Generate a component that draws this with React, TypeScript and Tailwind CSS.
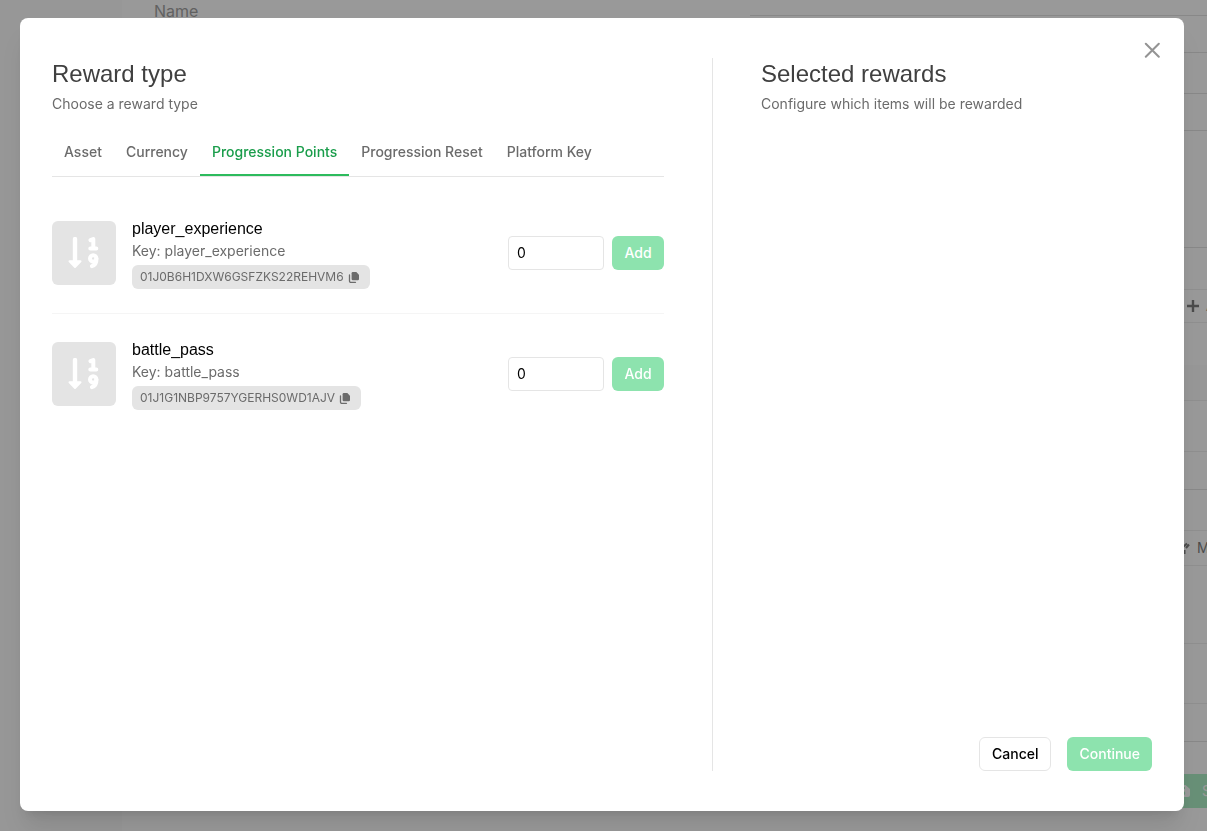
import { useState } from "react";

const tabs = [
  "Asset",
  "Currency",
  "Progression Points",
  "Progression Reset",
  "Platform Key",
];

const points = [
  { key: "player_experience", id: "01J0B6H1DXW6GSFZKS22REHVM6" },
  { key: "battle_pass", id: "01J1G1NBP9757YGERHS0WD1AJV" },
];

function SortIcon() {
  return (
    <svg viewBox="0 0 32 32" className="size-8 text-white" fill="none" stroke="currentColor" aria-hidden="true">
      <path d="M7 2V24" strokeWidth="4.400" strokeLinecap="round" />
      <path d="M1.500 24.300h11l-5.500 5.700z" fill="currentColor" strokeWidth="2" strokeLinejoin="round" />
      <path d="M22.500 3.200 25.300 2V11M22.300 11.500h6" strokeWidth="4" strokeLinecap="round" strokeLinejoin="round" />
      <circle cx="25.200" cy="21.400" r="3.200" strokeWidth="4" />
      <path d="M28.400 21.500c.2 3.800-1.200 6.500-4.500 7.600" strokeWidth="4" strokeLinecap="round" />
    </svg>
  );
}

function CopyIcon() {
  return (
    <svg viewBox="0 0 12 12" className="size-3" aria-hidden="true">
      <path d="M4.800 1h3.500L11 3.700V8a1.200 1.200 0 0 1-1.200 1.200h-5A1.200 1.200 0 0 1 3.600 8V2.200A1.200 1.200 0 0 1 4.800 1z" fill="currentColor" />
      <path d="M1.500 4V10a1.300 1.300 0 0 0 1.300 1.300H7.500" fill="none" stroke="currentColor" strokeWidth="1.300" strokeLinecap="round" />
    </svg>
  );
}

function PageBehind() {
  return (
    <div aria-hidden="true" className="flex h-screen overflow-hidden bg-white text-neutral-700">
      <div className="w-[122px] shrink-0 bg-neutral-50" />
      <div className="min-w-0 flex-1 pl-8 text-base leading-[22px] text-neutral-500">
        Name
      </div>
      <div className="w-[457px] shrink-0 overflow-hidden whitespace-nowrap text-sm">
        <div className="h-4 border-b border-neutral-300" />
        <div className="h-[37px] border-b border-neutral-300" />
        <div className="h-[41px] border-b border-neutral-300" />
        <div className="h-[37px] border-b border-neutral-300" />
        <div className="h-[117px] border-b border-neutral-300" />
        <div className="h-[42px] border-b border-neutral-200" />
        <div className="flex h-[33px] items-center border-b border-neutral-200 pl-[436px]">
          <svg viewBox="0 0 14 14" className="size-3.5 shrink-0" stroke="currentColor" strokeWidth="2.400">
            <path d="M7 1v12M1 7h12" />
          </svg>
          <span className="ml-1.5">Add</span>
        </div>
        <div className="h-[42px]" />
        <div className="h-9 border-b border-neutral-200 bg-neutral-50" />
        <div className="h-[51px] border-b border-neutral-200" />
        <div className="h-[38px] border-b border-neutral-300" />
        <div className="h-[41px] border-b border-neutral-200" />
        <div className="flex h-[35px] items-center border-b border-neutral-200 pl-[427px]">
          <svg viewBox="0 0 14 14" className="size-3.5 shrink-0" fill="none" stroke="currentColor" strokeWidth="2">
            <path d="M6 6 10 2.500M9 7l3-3.500M7.500 9v4" />
          </svg>
          <span className="ml-1.5">Manage</span>
        </div>
        <div className="h-[78px] border-b border-neutral-200" />
        <div className="h-[60px] border-b border-neutral-200" />
        <div className="h-[38px] border-b border-neutral-300" />
        <div className="mt-8 flex h-[34px] items-center bg-[#86e8ab] pl-[426px] text-white">
          <svg viewBox="0 0 14 14" className="size-3.5 shrink-0" fill="currentColor">
            <path fillRule="evenodd" d="M3 1h6.500L14 5v6a2 2 0 0 1-2 2H3a2 2 0 0 1-2-2V3a2 2 0 0 1 2-2zm4 6a2.200 2.200 0 1 0 .1 0zM4 3v2h5V3z" />
          </svg>
          <span className="ml-3">Save</span>
        </div>
      </div>
    </div>
  );
}

export default function App() {
  const [active, setActive] = useState("Progression Points");

  return (
    <div className="font-['Inter',sans-serif]">
      <PageBehind />
      <div className="fixed inset-0 flex bg-[#555555]/60 pt-[18px] pr-[23px] pb-5 pl-5">
        <div
          role="dialog"
          aria-modal="true"
          aria-labelledby="reward-title"
          className="relative grid flex-1 grid-cols-[3fr_2fr] rounded-lg bg-white px-8 py-10 shadow-xl"
        >
          <button type="button" aria-label="Close" className="absolute top-5 right-5 p-1 text-[#949494]">
            <svg viewBox="0 0 16 16" className="size-4" stroke="currentColor" strokeWidth="2" strokeLinecap="round">
              <path d="M1.800 1.800l13 13M14.800 1.800l-13 13" />
            </svg>
          </button>

          <section className="pr-12">
            <h2 id="reward-title" className="font-['Liberation_Sans',sans-serif] text-2xl leading-8 text-[#404040]">
              Reward type
            </h2>
            <p className="mt-1 text-sm text-[#6b6b6b]">Choose a reward type</p>

            <div role="tablist" className="mt-4 flex border-b border-neutral-200">
              {tabs.map((tab) => (
                <button
                  key={tab}
                  type="button"
                  role="tab"
                  aria-selected={tab === active}
                  onClick={() => setActive(tab)}
                  className={
                    tab === active
                      ? "border-b-2 border-[#2dbb5d] px-3 pt-3 pb-3 text-sm font-medium text-[#1a9d4b]"
                      : "border-b-2 border-transparent px-3 pt-3 pb-3 text-sm font-medium text-[#6b6b6b]"
                  }
                >
                  {tab}
                </button>
              ))}
            </div>

            <ul className="mt-4">
              {points.map((point) => (
                <li key={point.key} className="flex items-center border-b border-neutral-100 py-6 last:border-b-0">
                  <div className="flex size-16 shrink-0 items-center justify-center rounded-md bg-[#e4e4e4]">
                    <SortIcon />
                  </div>
                  <div className="ml-4 flex min-w-0 flex-1 flex-col items-start">
                    <h3 className="font-['Liberation_Sans',sans-serif] text-base text-black">{point.key}</h3>
                    <p className="text-sm text-[#6b6b6b]">Key: {point.key}</p>
                    <button
                      type="button"
                      title="Copy ID"
                      className="mt-1 flex h-6 items-center gap-1 rounded-md bg-[#e4e4e4] pr-2.5 pl-2 text-xs text-[#6b6b6b]"
                    >
                      {point.id}
                      <CopyIcon />
                    </button>
                  </div>
                  <input
                    type="text"
                    inputMode="numeric"
                    defaultValue="0"
                    aria-label={`Amount of ${point.key}`}
                    className="w-24 rounded border border-neutral-200 px-2 py-1.5 text-sm text-black"
                  />
                  <button
                    type="button"
                    className="ml-2 w-[52px] rounded-md bg-[#8de3ae] py-[7px] text-center text-sm font-medium text-white"
                  >
                    Add
                  </button>
                </li>
              ))}
            </ul>
          </section>

          <section className="flex flex-col border-l border-neutral-200 pl-12">
            <h2 className="font-['Liberation_Sans',sans-serif] text-2xl leading-8 text-[#404040]">
              Selected rewards
            </h2>
            <p className="mt-1 text-sm text-[#6b6b6b]">Configure which items will be rewarded</p>
            <div className="mt-auto flex justify-end gap-4">
              <button
                type="button"
                className="rounded-md border border-neutral-200 px-3 py-1.5 text-sm font-medium text-black"
              >
                Cancel
              </button>
              <button type="button" className="rounded-md bg-[#8de3ae] px-3 py-[7px] text-sm font-medium text-white">
                Continue
              </button>
            </div>
          </section>
        </div>
      </div>
    </div>
  );
}
